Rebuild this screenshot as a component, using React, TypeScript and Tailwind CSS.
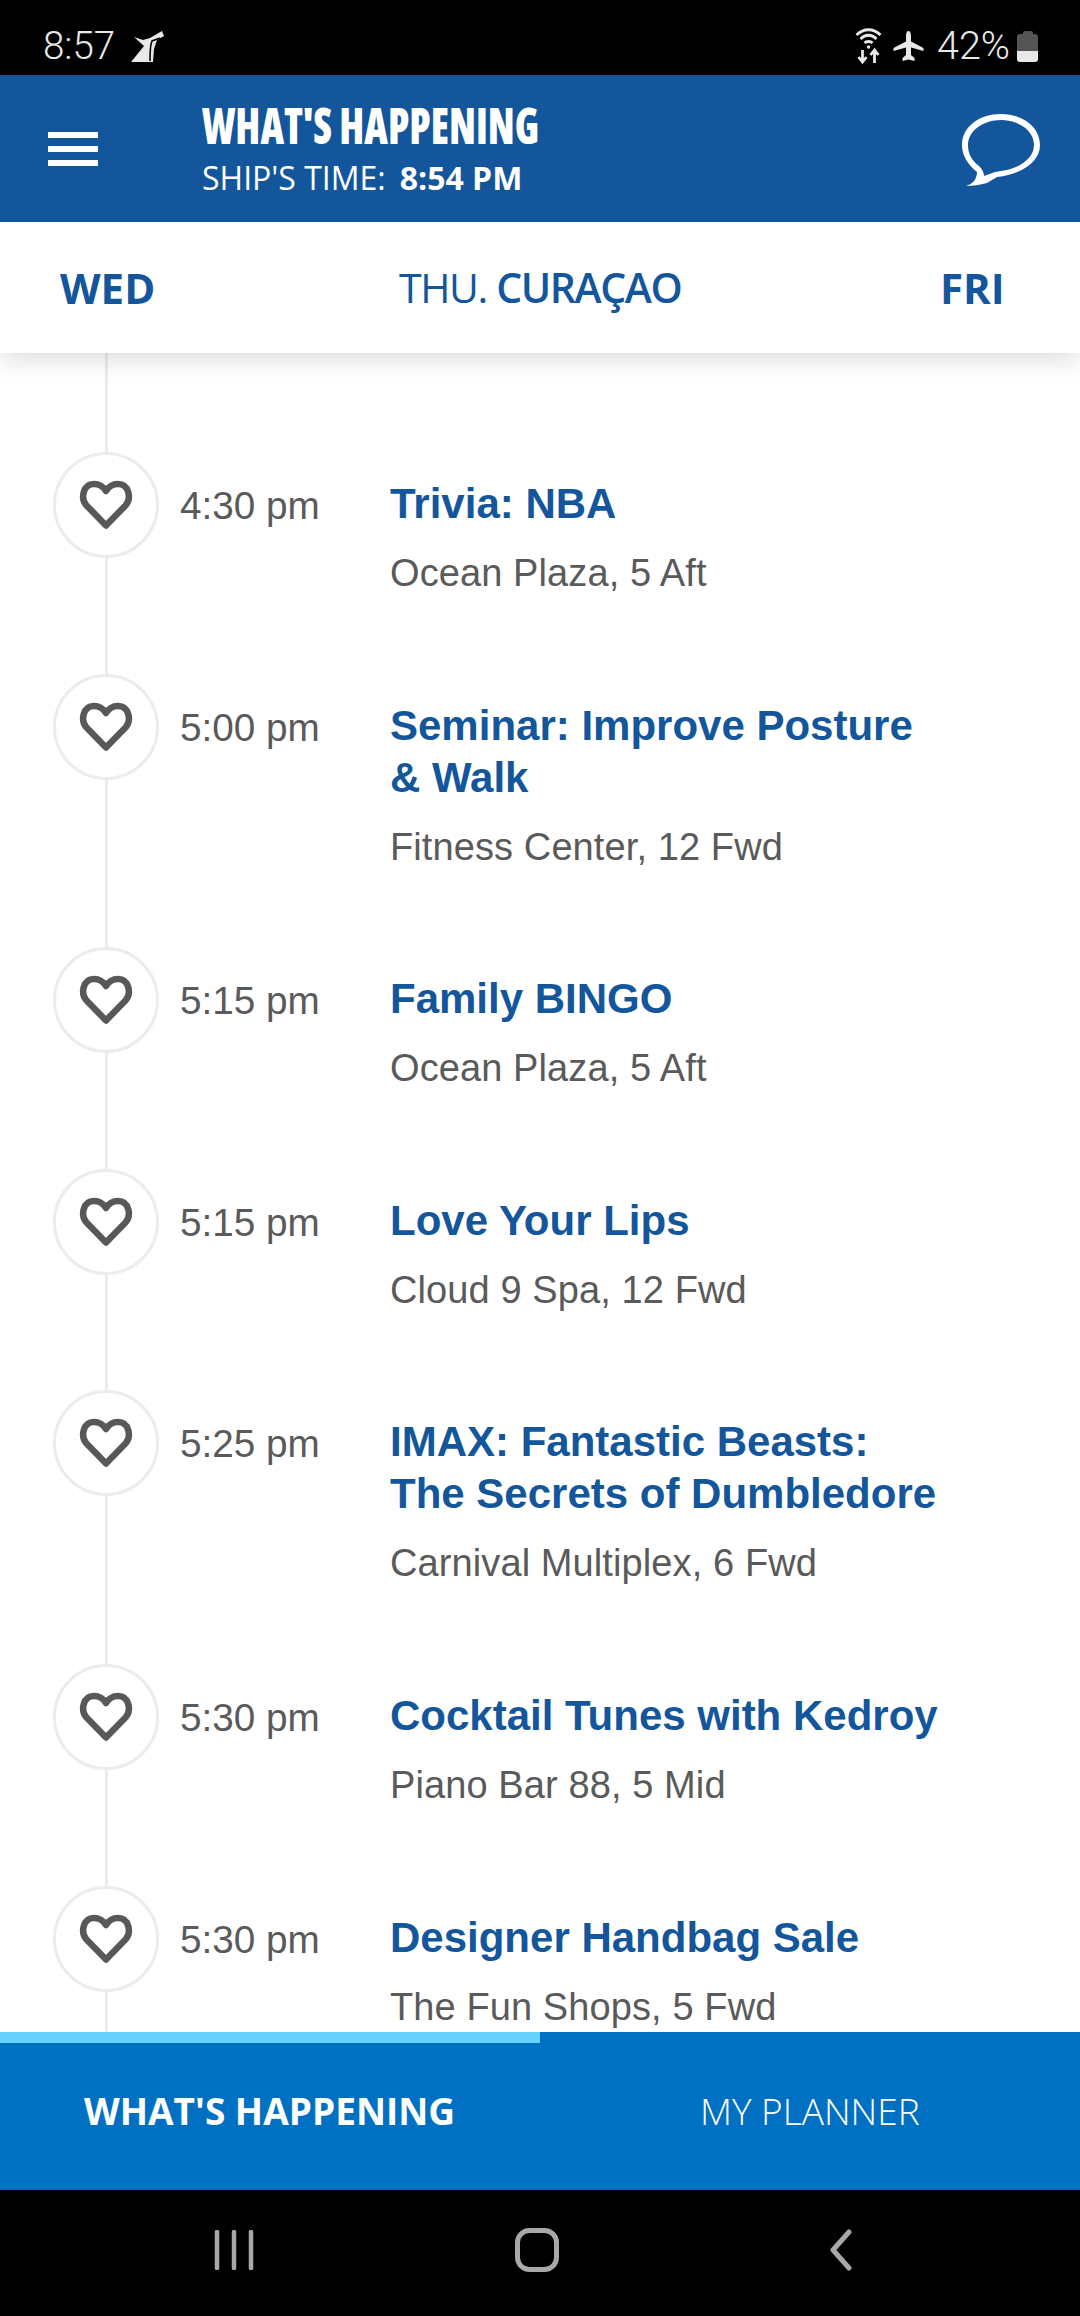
import React from "react";

const sans = "font-['Liberation_Sans',Arial,sans-serif]";
const open = "font-['Open_Sans',sans-serif]";

const events = [
  { time: "4:30 pm", title: ["Trivia: NBA"], place: "Ocean Plaza, 5 Aft" },
  { time: "5:00 pm", title: ["Seminar: Improve Posture", "& Walk"], place: "Fitness Center, 12 Fwd" },
  { time: "5:15 pm", title: ["Family BINGO"], place: "Ocean Plaza, 5 Aft" },
  { time: "5:15 pm", title: ["Love Your Lips"], place: "Cloud 9 Spa, 12 Fwd" },
  { time: "5:25 pm", title: ["IMAX: Fantastic Beasts:", "The Secrets of Dumbledore"], place: "Carnival Multiplex, 6 Fwd" },
  { time: "5:30 pm", title: ["Cocktail Tunes with Kedroy"], place: "Piano Bar 88, 5 Mid" },
  { time: "5:30 pm", title: ["Designer Handbag Sale"], place: "The Fun Shops, 5 Fwd" },
];

function Heart() {
  return (
    <svg width="54" height="50" viewBox="0 0 54 50" fill="none" stroke="#585858" strokeWidth="6.5" strokeLinejoin="round">
      <path d="M27 45.5 L7.5 25.5 C1.5 19 3.5 4 15 4 C20.5 4 24.5 7 27 11 C29.5 7 33.5 4 39 4 C50.5 4 52.5 19 46.5 25.5 Z" />
    </svg>
  );
}

function EventRow({ time, title, place }: { time: string; title: string[]; place: string }) {
  return (
    <div className="flex items-start pl-[53px] pb-[75.6px]">
      <div className="w-[106px] h-[106px] shrink-0 rounded-full border-[3px] border-[#ececec] bg-white flex items-center justify-center">
        <Heart />
      </div>
      <div className={`w-[231px] shrink-0 pl-[21px] pt-[27px] text-[38.7px] leading-[53px] text-[#5a5a5a] ${sans}`}>{time}</div>
      <div className={`pt-[26px] ${sans}`}>
        {title.map((line) => (
          <div key={line} className="text-[42px] leading-[52px] font-bold text-[#14569b] whitespace-nowrap">
            {line}
          </div>
        ))}
        <div className="mt-[18px] text-[38px] leading-[50px] tracking-[0.1px] text-[#5a5a5a] whitespace-nowrap">{place}</div>
      </div>
    </div>
  );
}

export default function App() {
  return (
    <div className="w-[1080px] h-[2316px] flex flex-col overflow-hidden bg-white">
      {/* Status bar */}
      <div className="h-[75px] shrink-0 bg-black flex items-center text-[#e8e8e8] pl-[43px] pr-[42px] pt-[17px]">
        <span className="font-['Roboto',sans-serif] text-[38.5px] font-light leading-none">8:57</span>
        <svg className="ml-[16px]" width="33" height="31" viewBox="0 0 33 31">
          <path d="M0 31 L13 15 L3 6 L12 9 L19 7 L31 0 L33 5 L26 9 L23 18 L22 31 Z" fill="#e8e8e8" />
          <path d="M19 30 C19 20 19 14 21 10 L29 7" fill="none" stroke="#000" strokeWidth="1.6" />
        </svg>
        <div className="ml-auto flex items-center">
          <svg width="27" height="36" viewBox="0 0 26 36" fill="none" stroke="#e8e8e8" strokeWidth="2.8">
            <path d="M1 7 C8 0 18 0 25 7" />
            <path d="M5 11 C10 6 16 6 21 11" />
            <path d="M9 15 C11 13 15 13 17 15" />
            <circle cx="13" cy="19" r="1.7" fill="#e8e8e8" stroke="none" />
            <path d="M7 22 V34 M3 29 L7 34 L11 29 M19 35 V23 M15 27 L19 22 L23 27" />
          </svg>
          <svg className="ml-[11px]" width="31" height="30" viewBox="0 0 30 30">
            <path d="M15 0 C16.6 0 17.5 2 17.5 5 V10.5 L30 17 V20 L17.5 16.5 V24 L21 27 V30 L15 28.4 L9 30 V27 L12.5 24 V16.5 L0 20 V17 L12.5 10.5 V5 C12.5 2 13.4 0 15 0 Z" fill="#e8e8e8" />
          </svg>
          <span className="ml-[13px] font-['Roboto',sans-serif] text-[39.5px] font-light leading-none">42%</span>
          <div className="ml-[7px] w-[21px] h-[31px] flex flex-col items-center">
            <div className="w-[10px] h-[3px] bg-[#555] rounded-t-[2px]" />
            <div className="w-[21px] h-[17px] bg-[#555] rounded-t-[3px]" />
            <div className="w-[21px] h-[11px] bg-[#e8e8e8] rounded-b-[3px]" />
          </div>
        </div>
      </div>

      {/* Header */}
      <div className="h-[147px] shrink-0 bg-[#14569b] flex items-center text-white relative z-20">
        <div className="ml-[48px] w-[50px] flex flex-col gap-[8px]">
          <div className="h-[6px] bg-white" />
          <div className="h-[6px] bg-white" />
          <div className="h-[6px] bg-white" />
        </div>
        <div className={`ml-[104px] ${open}`}>
          <div className="text-[49px] leading-[50px] font-extrabold whitespace-nowrap [font-stretch:75%] origin-left scale-x-[0.84]">
            WHAT'S HAPPENING
          </div>
          <div className="flex text-[32px] leading-[38px] mt-[9px] whitespace-nowrap">
            <span className="font-normal">SHIP'S TIME:</span>
            <span className="ml-[14px] font-bold">8:54 PM</span>
          </div>
        </div>
        <svg className="ml-auto mr-[40px] mb-[-2px]" width="78" height="72" viewBox="0 0 78 72">
          <path
            fillRule="evenodd"
            fill="#fff"
            d="M39 0 C61 0 78 13 78 31 C78 48 60 60 35 63 L25 69 C18 71 11 72 4 72 C11 70 15 65 15 58 C5 50 0 41 0 31 C0 13 17 0 39 0 Z M39 6 C56 6 72 16 72 31 C72 45 56 55 39 57 L33 58 L22 62 C22 58 20 55 17 52 C9 46 6 39 6 31 C6 17 21 6 39 6 Z"
          />
        </svg>
      </div>

      {/* Day selector */}
      <div className={`h-[131px] shrink-0 bg-white flex items-center pl-[60px] text-[#14569b] relative z-10 shadow-[0_4px_28px_rgba(0,0,0,0.16)] ${open}`}>
        <span className="w-[339px] text-[42px] font-bold whitespace-nowrap">WED</span>
        <span className="w-[541px] text-[41px] tracking-[-1.4px] whitespace-nowrap">
          THU. <span className="font-semibold">CURAÇAO</span>
        </span>
        <span className="text-[42px] font-bold">FRI</span>
      </div>

      {/* Timeline */}
      <div className="flex-1 min-h-0 overflow-hidden relative pt-[99px]">
        <div className="absolute left-[105px] top-0 bottom-0 w-[3px] bg-[#ececec]" />
        <div className="relative">
          {events.map((e, i) => (
            <EventRow key={i} {...e} />
          ))}
        </div>
      </div>

      {/* Bottom tabs */}
      <div className={`h-[158px] shrink-0 bg-[#0071c2] flex text-white relative ${open}`}>
        <div className="absolute left-0 top-0 w-[540px] h-[11px] bg-[#66d2ff]" />
        <div className="w-[540px] pl-[84px] pt-[54px] text-[37px] leading-[50px] font-bold whitespace-nowrap">WHAT'S HAPPENING</div>
        <div className="pl-[160px] pt-[54px] text-[37px] leading-[50px] font-light whitespace-nowrap">MY PLANNER</div>
      </div>

      {/* Android nav */}
      <div className="h-[126px] shrink-0 bg-black flex items-center pb-[6px]">
        <svg className="ml-[214px]" width="42" height="40" viewBox="0 0 42 40" fill="none" stroke="#a8a8a8" strokeWidth="4.5" strokeLinecap="round">
          <path d="M3 2 V38 M20 2 V38 M37 2 V38" />
        </svg>
        <svg className="ml-[259px]" width="44" height="44" viewBox="0 0 44 44" fill="none" stroke="#a8a8a8" strokeWidth="5">
          <rect x="2.5" y="2.5" width="39" height="39" rx="12" />
        </svg>
        <svg className="ml-[268px]" width="26" height="42" viewBox="0 0 26 42" fill="none" stroke="#a8a8a8" strokeWidth="5" strokeLinecap="round" strokeLinejoin="round">
          <path d="M22 3 L6 21 L22 39" />
        </svg>
      </div>
    </div>
  );
}
